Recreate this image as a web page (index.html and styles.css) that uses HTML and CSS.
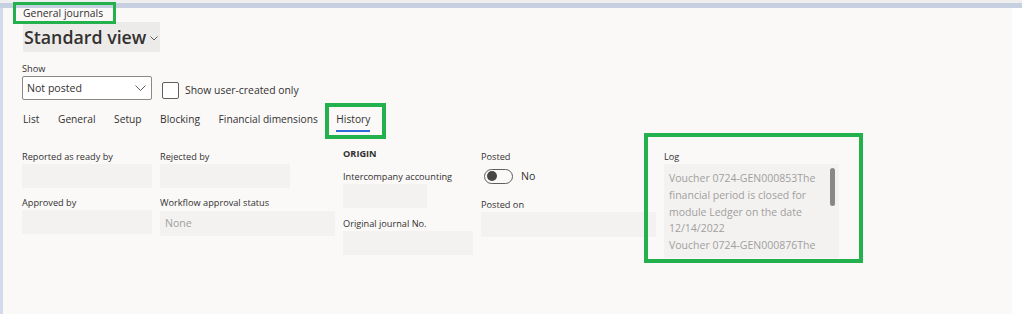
FILE: index.html
```html
<!DOCTYPE html>
<html lang="en">
<head>
<meta charset="utf-8">
<title>General journals</title>
<link rel="stylesheet" href="styles.css">
</head>
<body>
<div class="topline"></div>
<div class="bar"></div>
<div class="shell">
  <main class="frame">
    <div class="crumb">General journals</div>
    <div class="title">
      <h1>Standard view</h1>
      <svg class="title-chev" width="8" height="5" viewBox="0 0 8 5"><path d="M0.5 0.5 L4 4 L7.5 0.5" fill="none" stroke="#605e5c" stroke-width="1"/></svg>
    </div>
    <div class="filters">
      <div class="field">
        <div class="lbl">Show</div>
        <div class="combo"><span>Not posted</span><svg width="11" height="6" viewBox="0 0 11 6"><path d="M0.5 0.5 L5.5 5.5 L10.5 0.5" fill="none" stroke="#605e5c" stroke-width="1"/></svg></div>
      </div>
      <div class="check"><span class="box"></span><span>Show user-created only</span></div>
    </div>
    <nav class="tabs">
      <span class="tab">List</span>
      <span class="tab">General</span>
      <span class="tab">Setup</span>
      <span class="tab">Blocking</span>
      <span class="tab">Financial dimensions</span>
      <span class="tab active">History</span>
    </nav>
    <section class="form">
      <div class="col col-a">
        <div class="fld"><div class="lbl">Reported as ready by</div><div class="inp"></div></div>
        <div class="fld"><div class="lbl">Approved by</div><div class="inp"></div></div>
      </div>
      <div class="col col-b">
        <div class="fld"><div class="lbl">Rejected by</div><div class="inp narrow"></div></div>
        <div class="fld"><div class="lbl">Workflow approval status</div><div class="inp muted">None</div></div>
      </div>
      <div class="col col-c">
        <div class="group">ORIGIN</div>
        <div class="fld fld-ic"><div class="lbl">Intercompany accounting</div><div class="inp small"></div></div>
        <div class="fld fld-oj"><div class="lbl">Original journal No.</div><div class="inp"></div></div>
      </div>
      <div class="col col-d">
        <div class="fld"><div class="lbl">Posted</div>
          <div class="toggle-row"><span class="toggle"><span class="knob"></span></span><span>No</span></div>
        </div>
        <div class="fld fld-po"><div class="lbl">Posted on</div><div class="inp"></div></div>
      </div>
      <div class="col col-e">
        <div class="fld"><div class="lbl">Log</div>
          <div class="log">
            <div class="log-text">Voucher 0724-GEN000853The<br>financial period is closed for<br>module Ledger on the date<br>12/14/2022<br>Voucher 0724-GEN000876The</div>
            <span class="thumb"></span>
          </div>
        </div>
      </div>
    </section>
    <div class="mark mark-crumb"></div>
    <div class="mark mark-tab"></div>
    <div class="mark mark-log"></div>
  </main>
</div>
</body>
</html>
```
FILE: styles.css
```css
html, body {
  margin: 0;
  padding: 0;
  background: #ffffff;
  font-family: "Open Sans", "Noto Sans", sans-serif;
  color: #323130;
}
body { overflow: hidden; }
.topline { height: 3px; background: #efefef; }
.bar { height: 5px; background: #c7d0e1; }
.shell { display: flex; }
.frame {
  position: relative;
  flex: 0 0 1012px;
  height: 306px;
  box-sizing: border-box;
  border-left: 3px solid #d3dbea;
  background: #faf9f8;
  padding-left: 19px;
}
.crumb {
  padding-left: 1px;
  font-size: 10.4px;
  line-height: 12px;
  height: 12px;
  margin-top: -1px;
}
.title {
  display: inline-flex;
  align-items: center;
  height: 30px;
  margin-top: 3px;
  margin-left: 1px;
  padding: 0 2px 0 1px;
  background: #edebe9;
}
.title h1 {
  margin: 0;
  font-size: 17.8px;
  font-weight: 600;
  line-height: 30px;
}
.title-chev { margin-left: 4px; margin-top: 3px; }
.filters {
  display: flex;
  align-items: flex-end;
  margin-top: 10px;
}
.lbl {
  font-size: 9.2px;
  font-weight: 500;
  line-height: 14px;
  height: 14px;
  white-space: nowrap;
}
.combo {
  box-sizing: border-box;
  width: 130px;
  height: 24px;
  border: 1px solid #8a8886;
  border-radius: 2px;
  background: #ffffff;
  display: flex;
  align-items: center;
  justify-content: space-between;
  padding: 0 5px 0 4px;
  font-size: 10.6px;
}
.check {
  display: flex;
  align-items: center;
  gap: 6px;
  height: 24px;
  margin-left: 10px;
  padding-top: 4px;
  box-sizing: border-box;
  font-size: 10.4px;
}
.check .box {
  box-sizing: border-box;
  width: 17px;
  height: 17px;
  border: 1px solid #605e5c;
  border-radius: 2px;
  background: #ffffff;
}
.tabs {
  display: flex;
  gap: 18.6px;
  margin-top: 8px;
  padding-left: 1px;
}
.tab {
  font-size: 10.2px;
  line-height: 22px;
  height: 22px;
  border-bottom: 2px solid transparent;
}
.tab.active { border-bottom-color: #2f6bd8; }
.form {
  display: flex;
  gap: 8px;
  margin-top: 18px;
}
.col { display: flex; flex-direction: column; }
.col-a { width: 130px; }
.col-b { width: 175px; }
.col-c { width: 130px; }
.col-d { width: 175px; }
.col-e { width: 175px; }
.fld + .fld { margin-top: 8px; }
.inp {
  height: 24px;
  background: #f3f2f1;
  box-sizing: border-box;
  padding-left: 5px;
  font-size: 10.6px;
  line-height: 25px;
}
.inp.narrow { width: 130px; }
.inp.small { width: 84px; }
.inp.muted { color: #a19f9d; height: 25px; margin-top: 1px; }
.group {
  font-size: 9.2px;
  font-weight: 700;
  line-height: 8px;
  height: 8px;
  margin-top: 0;
}
.col-c .fld-ic { margin-top: 12px; }
.col-c .fld-oj { margin-top: 9px; }
.col-d .fld-po { margin-top: 10px; }
.col-d .fld-po .inp { height: 25px; }
.toggle-row {
  display: flex;
  align-items: center;
  gap: 8px;
  height: 24px;
  padding-left: 3px;
  font-size: 10.6px;
}
.toggle {
  box-sizing: border-box;
  width: 29px;
  height: 15px;
  border: 1px solid #605e5c;
  border-radius: 8px;
  display: flex;
  align-items: center;
  padding-left: 2px;
}
.knob {
  width: 10px;
  height: 10px;
  border-radius: 50%;
  background: #484644;
}
.log {
  position: relative;
  height: 94px;
  background: #f3f2f1;
  overflow: hidden;
}
.log-text {
  padding: 6px 0 0 5px;
  font-size: 10.5px;
  line-height: 16.8px;
  color: #a19f9d;
  white-space: nowrap;
}
.thumb {
  position: absolute;
  left: 166px;
  top: 4px;
  width: 5px;
  height: 38px;
  border-radius: 3px;
  background: #8a8886;
}
.mark {
  position: absolute;
  border: 3px solid #22b14c;
  box-sizing: border-box;
}
.mark-crumb { left: 10px; top: -6px; width: 103px; height: 22px; }
.mark-tab { left: 322px; top: 95px; width: 61px; height: 36px; border-width: 4px; }
.mark-log { left: 641px; top: 125px; width: 219px; height: 130px; border-width: 4px; }
```
